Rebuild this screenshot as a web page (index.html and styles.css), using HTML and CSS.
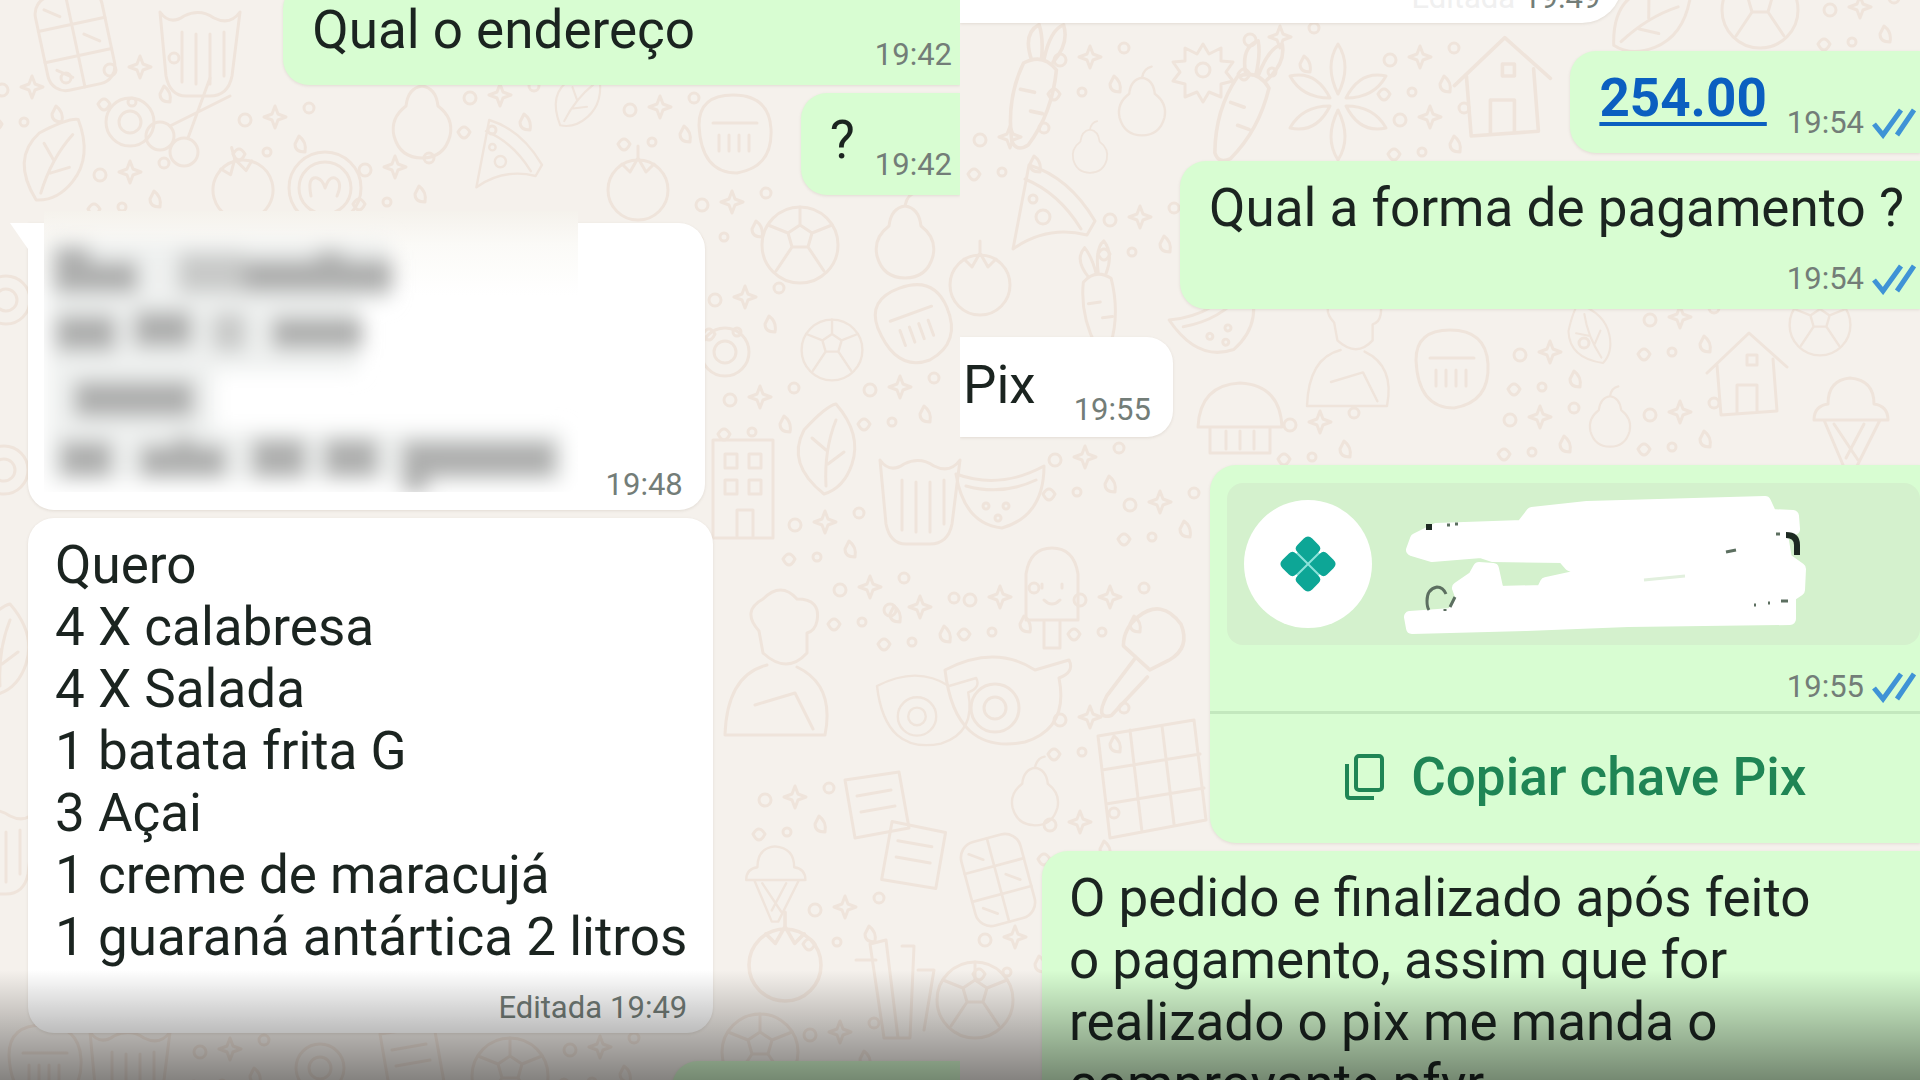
FILE: index.html
```html
<!DOCTYPE html>
<html lang="pt-BR">
<head>
  <meta charset="UTF-8">
  <meta name="viewport" content="width=device-width, initial-scale=1.0">
  <title>Conversa - Pedido</title>
  <link rel="stylesheet" href="styles.css">
</head>
<body>
  <svg class="wallpaper" viewBox="0 0 1920 1080" preserveAspectRatio="xMidYMid slice" aria-hidden="true">
    <defs>
      <g id="choco"><rect x="-34" y="-48" width="68" height="96" rx="18"/><path d="M0-48V48M-34-16H34M-34 16H34M-24-36l14 10M10-4l14 10M-24 26l14 10"/></g>
      <g id="pot"><path d="M-40-40q10 14 24 4 16-8 30 2 16 8 26-6l-8 64q-4 20-22 20h-24q-16 0-20-20zM-18-20v50M-4-18v50M10-18v50M24-20v44"/></g>
      <g id="ring"><circle r="24"/><circle r="11"/></g>
      <g id="swirl"><circle r="36"/><circle r="26"/><path d="M-14 8q-4-20 6-18 6 2 8 10 4-12 10-10 8 4 2 18"/></g>
      <g id="pear"><path d="M0-34q14 2 16 20 16 12 12 30-6 22-28 22T-28 16q-4-18 12-30 2-18 16-20zM0-34q2-12 12-14"/></g>
      <g id="tomato"><circle r="30"/><path d="M-16-26l8 8 8-14 8 14 8-8M0-32v-12"/></g>
      <g id="pizza"><path d="M-42 34L-26-50q40 12 66 56l-8 14q-40-10-74 14zM-30-36q34 14 56 50"/><circle cx="-12" cy="2" r="7"/><circle cx="-22" cy="-16" r="4"/></g>
      <g id="flower"><path d="M0-8Q-14-36 0-58 14-36 0-8zM0 8q-14 28 0 50 14-22 0-50zM-8-4Q-36-4-48-26-22-32-8-4zM8-4q28 0 40-22Q22-32 8-4zM-8 4q-28 0-40 22 26 6 40-22zM8 4q28 0 40 22Q22 32 8 4z"/></g>
      <g id="sun"><path d="M0-26l6 10 12-6v13l12 1-7 10 7 9-12 3v13L6 22 0 32l-6-10-12 5V14l-12-3 7-9-7-10 12-1v-13l12 6z"/><circle r="7"/></g>
      <g id="carrot"><path d="M-14-20q14-12 28 0 4 36-10 66-8 8-14 0-12-34-4-66zM-8-24q-12-20 0-30 6 10 8 28M2-26q0-26 10-32 8 14-2 32M-12 2h12M0 18h10"/></g>
      <g id="pop"><path d="M-26 30v-46q4-26 26-26t26 26v46zM-8 30v28h16V30M-10-6v4M10-6v4M-8 10q8 8 16 0"/></g>
      <g id="grid"><path d="M-52-44L44-60 56 40-40 58zM-20-50L-8 52M12-54l12 98M-48-10l98-16M-44 24l98-16"/></g>
      <g id="house"><path d="M-38-2L4-42l38 34M-28-10l4 50 56-4-4-52M-8 38V10h20v26M2-20h10v10H2z"/></g>
      <g id="mitt"><path d="M-36-10q0-30 34-30 36 0 38 34 2 38-34 44-36 0-38-48zM-22-12h44M-16 0v16M-6 0v16M4 0v16M14 0v16"/></g>
      <g id="leaf"><path d="M-4 44q-38-30-20-64 22-24 32-26 26 30 16 60-8 24-28 30zM-2 36Q-4 0 8-30M0 14l16-12M-2 0l-14-12"/></g>
      <g id="melon"><path d="M-44-26q44 16 88-8 0 50-42 62-38-4-46-54zM-34-14q36 10 70-6"/><circle cx="-14" cy="6" r="3"/><circle cx="6" cy="6" r="3"/><circle cx="-2" cy="18" r="3"/></g>
      <g id="ball"><circle r="38"/><path d="M-12-12l12-8 12 8-4 14h-16zM0-20v-18M12-12l20-8M8 2l16 24M-8 2l-16 24M-12-12l-20-8"/></g>
      <g id="block"><path d="M-32-50h60v98h-60zM-20-36h12v14h-12zM4-36h12v14H4zM-20-10h12v14h-12zM4-10h12v14H4zM-8 48V20H8v28"/></g>
      <g id="cook"><path d="M-26-34q-18-20 4-32 18-18 34 0 24 0 20 22-2 10-10 12v20q-20 22-44 0zM-18 0q-40 10-42 70h100q10-50-28-68M-30 40l40-12 18 36"/></g>
      <g id="pan"><path d="M-60-30q50-26 90 0l34-10q6 12-10 18 10 50-34 64-70 14-80-72z"/><circle cx="-10" cy="8" r="24"/><circle cx="-10" cy="8" r="11"/></g>
      <g id="ice"><path d="M-36 0q0-14 14-16 0-24 22-26 24 2 24 26 14 2 14 16zM-26 0l22 52h8L30 0M-16 4L8 40M14 4l-18 34"/></g>
      <g id="cap"><path d="M-42 12q2-42 42-44 40 2 42 44zM-30 12v26h60V12M-14 16v18M0 16v18M14 16v18"/></g>
      <g id="brush"><path d="M-6-40q20-16 36 6 8 20-10 30L4 4-18-16q0-14 12-24zM-8-6l-24 32q-10 20 4 16L2 10"/></g>
      <g id="sticks"><path d="M-20-46l16-4 12 98H-6zM12-44h12l-4 92H8M-34-30h20M28-20h16l-10 60"/></g>
      <g id="scissors"><circle cx="-30" cy="14" r="14"/><circle cx="-6" cy="30" r="14"/><path d="M-20 4L40-26M-2 16L20-44"/></g>
      <g id="card"><path d="M-30-30l54-8 10 56-54 10zM-18-14l34-6M-14 2l34-6"/></g>
      <g id="bits"><circle cx="-30" cy="-10" r="6"/><path d="M0-24l3 8 8 3-8 3-3 8-3-8-8-3 8-3zM24 6q8 6 6 16-10 0-10-8z"/><circle cx="-8" cy="22" r="4"/><circle cx="34" cy="-22" r="5"/><path d="M-42 24q6-10 12 0-6 12-12 0z"/></g>
    </defs>
    <g class="doodles">
      <use href="#choco" transform="translate(75 40) rotate(-12)"/>
      <use href="#pot" transform="translate(200 52)"/>
      <use href="#bits" transform="translate(140 80)"/>
      <use href="#ring" transform="translate(130 122)"/>
      <use href="#scissors" transform="translate(190 122)"/>
      <use href="#bits" transform="translate(32 100)"/>
      <use href="#leaf" transform="translate(55 160) rotate(20)"/>
      <use href="#bits" transform="translate(275 130)"/>
      <use href="#swirl" transform="translate(325 188)"/>
      <use href="#tomato" transform="translate(243 190) rotate(-15)"/>
      <use href="#bits" transform="translate(130 185)"/>
      <use href="#pear" transform="translate(422 120)"/>
      <use href="#pizza" transform="translate(510 160) scale(.8)"/>
      <use href="#bits" transform="translate(395 180)"/>
      <use href="#leaf" transform="translate(578 100) rotate(30) scale(.7)"/>
      <use href="#bits" transform="translate(500 108)"/>
      <use href="#mitt" transform="translate(735 135)"/>
      <use href="#tomato" transform="translate(638 190)"/>
      <use href="#bits" transform="translate(660 120)"/>
      <use href="#ball" transform="translate(800 245)"/>
      <use href="#bits" transform="translate(732 215)"/>
      <use href="#pear" transform="translate(905 240)"/>
      <use href="#bits" transform="translate(745 310)"/>
      <use href="#mitt" transform="translate(915 325) rotate(-20)"/>
      <use href="#ball" transform="translate(832 350) scale(.8)"/>
      <use href="#ring" transform="translate(725 352)"/>
      <use href="#leaf" transform="translate(828 450)"/>
      <use href="#bits" transform="translate(760 410)"/>
      <use href="#bits" transform="translate(900 400)"/>
      <use href="#block" transform="translate(745 490)"/>
      <use href="#pot" transform="translate(920 500)"/>
      <use href="#bits" transform="translate(825 535)"/>
      <use href="#cook" transform="translate(785 665)"/>
      <use href="#bits" transform="translate(870 600)"/>
      <use href="#bits" transform="translate(920 620)"/>
      <use href="#pan" transform="translate(925 710) scale(.8)"/>
      <use href="#card" transform="translate(875 810)"/>
      <use href="#bits" transform="translate(795 810)"/>
      <use href="#card" transform="translate(910 860) rotate(20)"/>
      <use href="#ice" transform="translate(775 880) scale(.8)"/>
      <use href="#bits" transform="translate(845 920)"/>
      <use href="#tomato" transform="translate(785 965) scale(1.2)"/>
      <use href="#sticks" transform="translate(890 990)"/>
      <use href="#ball" transform="translate(760 1052)"/>
      <use href="#bits" transform="translate(840 1045)"/>
      <use href="#mitt" transform="translate(45 1065)"/>
      <use href="#pot" transform="translate(130 1072)"/>
      <use href="#bits" transform="translate(230 1062)"/>
      <use href="#ring" transform="translate(320 1068)"/>
      <use href="#card" transform="translate(410 1064)"/>
      <use href="#ball" transform="translate(510 1076)"/>
      <use href="#bits" transform="translate(600 1060)"/>
      <use href="#ring" transform="translate(6 300)"/>
      <use href="#ring" transform="translate(4 470)"/>
      <use href="#leaf" transform="translate(2 650)"/>
      <use href="#pot" transform="translate(-4 850)"/>

      <use href="#carrot" transform="translate(1035 90) rotate(12) scale(1.2)"/>
      <use href="#sun" transform="translate(1203 70)"/>
      <use href="#flower" transform="translate(1338 102)"/>
      <use href="#pear" transform="translate(1142 105) scale(.8)"/>
      <use href="#bits" transform="translate(1090 70)"/>
      <use href="#carrot" transform="translate(1245 105) rotate(20) scale(1.2)"/>
      <use href="#bits" transform="translate(1280 50)"/>
      <use href="#house" transform="translate(1500 88) scale(1.2)"/>
      <use href="#bits" transform="translate(1420 70)"/>
      <use href="#bits" transform="translate(1430 130)"/>
      <use href="#leaf" transform="translate(1650 20) rotate(50)"/>
      <use href="#ball" transform="translate(1760 10)"/>
      <use href="#bits" transform="translate(1860 20)"/>
      <use href="#bits" transform="translate(1010 150)"/>
      <use href="#pear" transform="translate(1090 150) scale(.6)"/>
      <use href="#pizza" transform="translate(1055 215)"/>
      <use href="#tomato" transform="translate(980 285)"/>
      <use href="#carrot" transform="translate(1100 300) rotate(-8)"/>
      <use href="#bits" transform="translate(1140 230)"/>
      <use href="#melon" transform="translate(1220 325) rotate(-25)"/>
      <use href="#cook" transform="translate(1355 350) scale(.8)"/>
      <use href="#mitt" transform="translate(1452 370)"/>
      <use href="#leaf" transform="translate(1590 335) rotate(-30) scale(.7)"/>
      <use href="#bits" transform="translate(1550 365)"/>
      <use href="#house" transform="translate(1745 375)"/>
      <use href="#ball" transform="translate(1820 325) scale(.8)"/>
      <use href="#bits" transform="translate(1680 330)"/>
      <use href="#cap" transform="translate(1240 415)"/>
      <use href="#bits" transform="translate(1320 435)"/>
      <use href="#bits" transform="translate(1540 430)"/>
      <use href="#pear" transform="translate(1610 420) scale(.7)"/>
      <use href="#bits" transform="translate(1680 425)"/>
      <use href="#ice" transform="translate(1850 420)"/>
      <use href="#melon" transform="translate(1000 500)"/>
      <use href="#bits" transform="translate(1085 470)"/>
      <use href="#bits" transform="translate(1160 515)"/>
      <use href="#pop" transform="translate(1052 590)"/>
      <use href="#brush" transform="translate(1145 665) scale(1.2)"/>
      <use href="#bits" transform="translate(1110 610)"/>
      <use href="#bits" transform="translate(1000 610)"/>
      <use href="#pan" transform="translate(1005 700)"/>
      <use href="#grid" transform="translate(1150 780)"/>
      <use href="#pear" transform="translate(1035 795) scale(.8)"/>
      <use href="#bits" transform="translate(1090 730)"/>
      <use href="#choco" transform="translate(998 880) rotate(-15) scale(.9)"/>
      <use href="#bits" transform="translate(1080 835)"/>
      <use href="#ball" transform="translate(975 1000)"/>
      <use href="#bits" transform="translate(1015 950)"/>
    </g>
  </svg>

  <main class="screens">
    <section class="pane pane-left">
      <article class="msg sent wide first">
        <p class="text">Qual o endereço</p>
        <div class="meta"><time>19:42</time></div>
      </article>
      <article class="msg sent">
        <p class="text">?</p>
        <div class="meta"><time>19:42</time></div>
      </article>
      <article class="msg received wide tail group">
        <div class="hidden-address"></div>
        <svg class="smudge" viewBox="0 0 534 281" role="img" aria-label="Endereço oculto">
          <defs>
            <filter id="soft" x="-20%" y="-60%" width="140%" height="220%"><feGaussianBlur stdDeviation="10"/></filter>
            <linearGradient id="veil" x1="0" y1="0" x2="0" y2="1"><stop offset="0" stop-color="#f5f2ec"/><stop offset=".12" stop-color="#fbfaf7"/><stop offset=".3" stop-color="#fff"/></linearGradient>
            <clipPath id="edge"><path d="M0 0h534v281H0z"/></clipPath>
          </defs>
          <path fill="url(#veil)" d="M0 0h534v281H0z"/>
          <g clip-path="url(#edge)">
            <g filter="url(#soft)">
              <path fill="#eff1f0" d="M4 30h340v60h-30v70H170v60h350v50H4z"/>
              <path fill="#adaead" d="M10 36h36v14h48v32H10zM196 48h76v-8h28v8h48v34H196z"/>
              <path fill="#c8c9c8" d="M134 42h66v40h-66zM168 102h34v38h-34z"/>
              <path fill="#adaead" d="M12 104h60v36H12zM90 100h58v36H90zM228 106h90v32h-90z"/>
              <path fill="#adaead" d="M30 170h120v36H30z"/>
              <path fill="#adaead" d="M16 230h52v36H16zM96 234h34v-8h20v8h32v32H96zM208 228h54v38h-54zM280 228h54v38h-54zM358 230h154v36H384v14h-26z"/>
            </g>
          </g>
        </svg>
        <div class="meta"><time>19:48</time></div>
      </article>
      <article class="msg received stacked">
        <p class="text">Quero<br>4 X calabresa<br>4 X Salada<br>1 batata frita G<br>3 Açai<br>1 creme de maracujá<br>1 guaraná antártica 2 litros</p>
        <div class="meta">Editada <time>19:49</time></div>
      </article>
      <article class="msg sent next group"></article>
    </section>

    <section class="pane pane-right">
      <article class="msg received stacked cut">
        <div class="meta"><span class="faded">Editada</span> <time>19:49</time></div>
      </article>
      <article class="msg sent group">
        <p class="text"><a href="#valor">254.00</a></p>
        <div class="meta"><time>19:54</time><svg class="ticks" viewBox="0 0 44 32" role="img" aria-label="Lida"><path d="M2 17l9 11L29 3M25 28L42 3"/></svg></div>
      </article>
      <article class="msg sent stacked">
        <p class="text">Qual a forma de pagamento ?</p>
        <div class="meta"><time>19:54</time><svg class="ticks" viewBox="0 0 44 32" role="img" aria-label="Lida"><path d="M2 17l9 11L29 3M25 28L42 3"/></svg></div>
      </article>
      <article class="msg received short group">
        <p class="text">Pix</p>
        <div class="meta"><time>19:55</time></div>
      </article>
      <article class="pix-card group">
        <div class="pix-info">
          <span class="pix-avatar">
            <svg viewBox="-30 -30 60 60" role="img" aria-label="Pix">
              <path class="pix-glow" d="M0-22L22 0 0 22-22 0z"/>
              <g transform="rotate(45)">
                <path d="M-21-15q0-6 6-6H-6q5 0 5 5v15h-15q-5 0-5-5zM21-15q0-6-6-6H6q-5 0-5 5v15h15q5 0 5-5zM-21 15q0 6 6 6h9q5 0 5-5V1h-15q-5 0-5 5zM21 15q0 6-6 6H6q-5 0-5-5V1h15q5 0 5 5z"/>
              </g>
            </svg>
          </span>
          <svg class="scribble" viewBox="0 0 406 143" role="img" aria-label="Nome oculto">
            <path class="paint" d="M14 46L34 36 120 33 130 20 185 14 363 9 369 22 391 23 392 36 380 42 384 66 398 76 397 97 388 103 388 126 226 128 124 132 10 135 8 124 50 121 60 106 56 95 72 84 77 75 91 76 96 99 140 98 144 90 190 80 168 72 161 64 91 63 79 59 30 63 10 57z"/>
            <g class="ink">
              <path d="M27 31v6" stroke-width="6"/>
              <path class="thin" d="M45 32h3M53 31h3M352 112h2M366 110h2M379 108h7M374 41h4"/>
              <path class="thin" d="M324 59l10-2"/>
              <path d="M384 42q11 0 11 10v10" stroke-width="6"/>
              <path class="thin" d="M44 101q-3-7-9-7-10 2-10 14 0 6 2 9M53 104l-5 10M43 116v2"/>
              <path class="green" d="M242 87l41-4"/>
            </g>
          </svg>
        </div>
        <div class="meta"><time>19:55</time><svg class="ticks" viewBox="0 0 44 32" role="img" aria-label="Lida"><path d="M2 17l9 11L29 3M25 28L42 3"/></svg></div>
        <button type="button" class="copy">
          <svg viewBox="0 0 40 48" aria-hidden="true"><rect x="11" y="3" width="26" height="34" rx="3"/><path d="M2 11v31q0 3 3 3h24"/></svg>
          Copiar chave Pix
        </button>
      </article>
      <article class="msg sent stacked long">
        <p class="text">O pedido e finalizado após feito<br>o pagamento, assim que for<br>realizado o pix me manda o<br>comprovante pfvr</p>
      </article>
    </section>
  </main>
  <div class="shade"></div>
</body>
</html>
```

FILE: styles.css
```css
* {
  box-sizing: border-box;
}
body {
  margin: 0;
  height: 100vh;
  overflow: hidden;
  position: relative;
  background-color: #f5f1ec;
  color: #1b2420;
  font-family: Roboto, "Liberation Sans", sans-serif;
  font-size: 53px;
  line-height: 62px;
}
.wallpaper {
  position: absolute;
  inset: 0;
  width: 100%;
  height: 100%;
}
.doodles {
  fill: none;
  stroke: #efe4db;
  stroke-width: 3;
  stroke-linejoin: round;
  stroke-linecap: round;
}
.screens {
  position: relative;
  display: grid;
  grid-template-columns: 1fr 1fr;
  height: 100%;
}
.pane {
  display: flex;
  flex-direction: column;
  gap: 8px;
  min-width: 0;
  overflow: hidden;
}
.msg {
  position: relative;
  flex-shrink: 0;
  display: flex;
  justify-content: space-between;
  align-items: flex-end;
  gap: 20px;
  padding: 16px 8px 12px 29px;
  box-shadow: 0 1px 3px rgba(120, 100, 80, 0.15);
}
.sent {
  align-self: flex-end;
  background-color: #d8fdd2;
  border-radius: 26px 0 0 26px;
}
.received {
  align-self: flex-start;
  background-color: #fff;
  border-radius: 26px;
  padding-left: 27px;
  padding-right: 22px;
  padding-bottom: 7px;
}
.group {
  margin-top: 20px;
}
.wide {
  width: 70.5%;
}
.pane-left .received {
  margin-left: 28px;
}
.pane-right .sent {
  padding-right: 4px;
}
.text {
  margin: 0 0 12px;
}
.text a {
  color: #0b5fc0;
  font-weight: bold;
  text-decoration-thickness: 4px;
  text-underline-offset: 6px;
}
.meta {
  display: flex;
  align-items: center;
  gap: 8px;
  color: #737d78;
  font-size: 31px;
  line-height: 36px;
}
.stacked {
  flex-direction: column;
  justify-content: flex-start;
  gap: 22px;
}
.stacked .text {
  align-self: stretch;
  margin: 0;
}
.pane-right .stacked .text {
  margin-right: 12px;
}
.ticks {
  width: 44px;
  height: 32px;
  fill: none;
  stroke: #3f93d6;
  stroke-width: 5;
}

/* left pane */
.first {
  margin-top: -17px;
}
.tail {
  border-top-left-radius: 0;
}
.tail::before {
  content: "";
  position: absolute;
  top: 0;
  left: -18px;
  border-top: 26px solid #fff;
  border-left: 18px solid transparent;
}
.hidden-address {
  height: 264px;
}
.smudge {
  position: absolute;
  top: -12px;
  left: 16px;
  width: 534px;
  height: 281px;
}
.pane-left .stacked {
  padding-right: 26px;
}
.next {
  width: 30%;
  height: 101px;
}

/* right pane */
.cut {
  width: 69%;
  margin-top: -36px;
  border-radius: 0 0 40px 0;
}
.faded {
  color: #f0f0f0;
}
.pane-right .short {
  gap: 38px;
  padding: 17px 22px 9px 3px;
  border-radius: 0 26px 26px 0;
}
.pix-card {
  flex-shrink: 0;
  align-self: flex-end;
  width: 74%;
  padding-top: 18px;
  background-color: #d8fdd2;
  border-radius: 26px 0 0 26px;
  box-shadow: 0 1px 3px rgba(120, 100, 80, 0.15);
}
.pix-info {
  display: flex;
  align-items: center;
  gap: 30px;
  height: 162px;
  margin-left: 17px;
  padding-left: 17px;
  background-color: #d4f1cd;
  border-radius: 16px;
}
.pix-avatar {
  display: flex;
  align-items: center;
  justify-content: center;
  width: 128px;
  height: 128px;
  background-color: #fff;
  border-radius: 50%;
}
.pix-avatar svg {
  width: 60px;
  height: 60px;
  fill: #0da696;
}
.pix-avatar .pix-glow {
  fill: #8be3da;
}
.scribble {
  width: 406px;
  height: 143px;
  fill: none;
}
.paint {
  fill: #fff;
  stroke: #fff;
  stroke-width: 12;
  stroke-linejoin: round;
}
.ink {
  stroke: #1d2a22;
}
.ink .thin {
  stroke: #5c6f60;
  stroke-width: 3;
}
.ink .green {
  stroke: #e2f0de;
  stroke-width: 3;
}
.pix-card .meta {
  justify-content: flex-end;
  padding: 24px 4px 6px 0;
}
.copy {
  display: flex;
  align-items: center;
  justify-content: center;
  gap: 26px;
  width: 100%;
  height: 132px;
  padding: 0 0 4px 22px;
  background: none;
  border: none;
  border-top: 3px solid #c3e8be;
  color: #1f8555;
  font: 500 53px/62px Roboto, "Liberation Sans", sans-serif;
  cursor: pointer;
}
.copy svg {
  width: 40px;
  height: 48px;
  fill: none;
  stroke: currentColor;
  stroke-width: 4;
}
.pane-right .long {
  align-self: stretch;
  margin-left: 82px;
  padding-left: 27px;
}

/* darkening over the bottom edge */
.shade {
  position: absolute;
  left: 0;
  right: 0;
  bottom: 0;
  height: 110px;
  background: linear-gradient(rgba(0, 0, 0, 0), rgba(0, 0, 0, 0.46));
  pointer-events: none;
}
```
